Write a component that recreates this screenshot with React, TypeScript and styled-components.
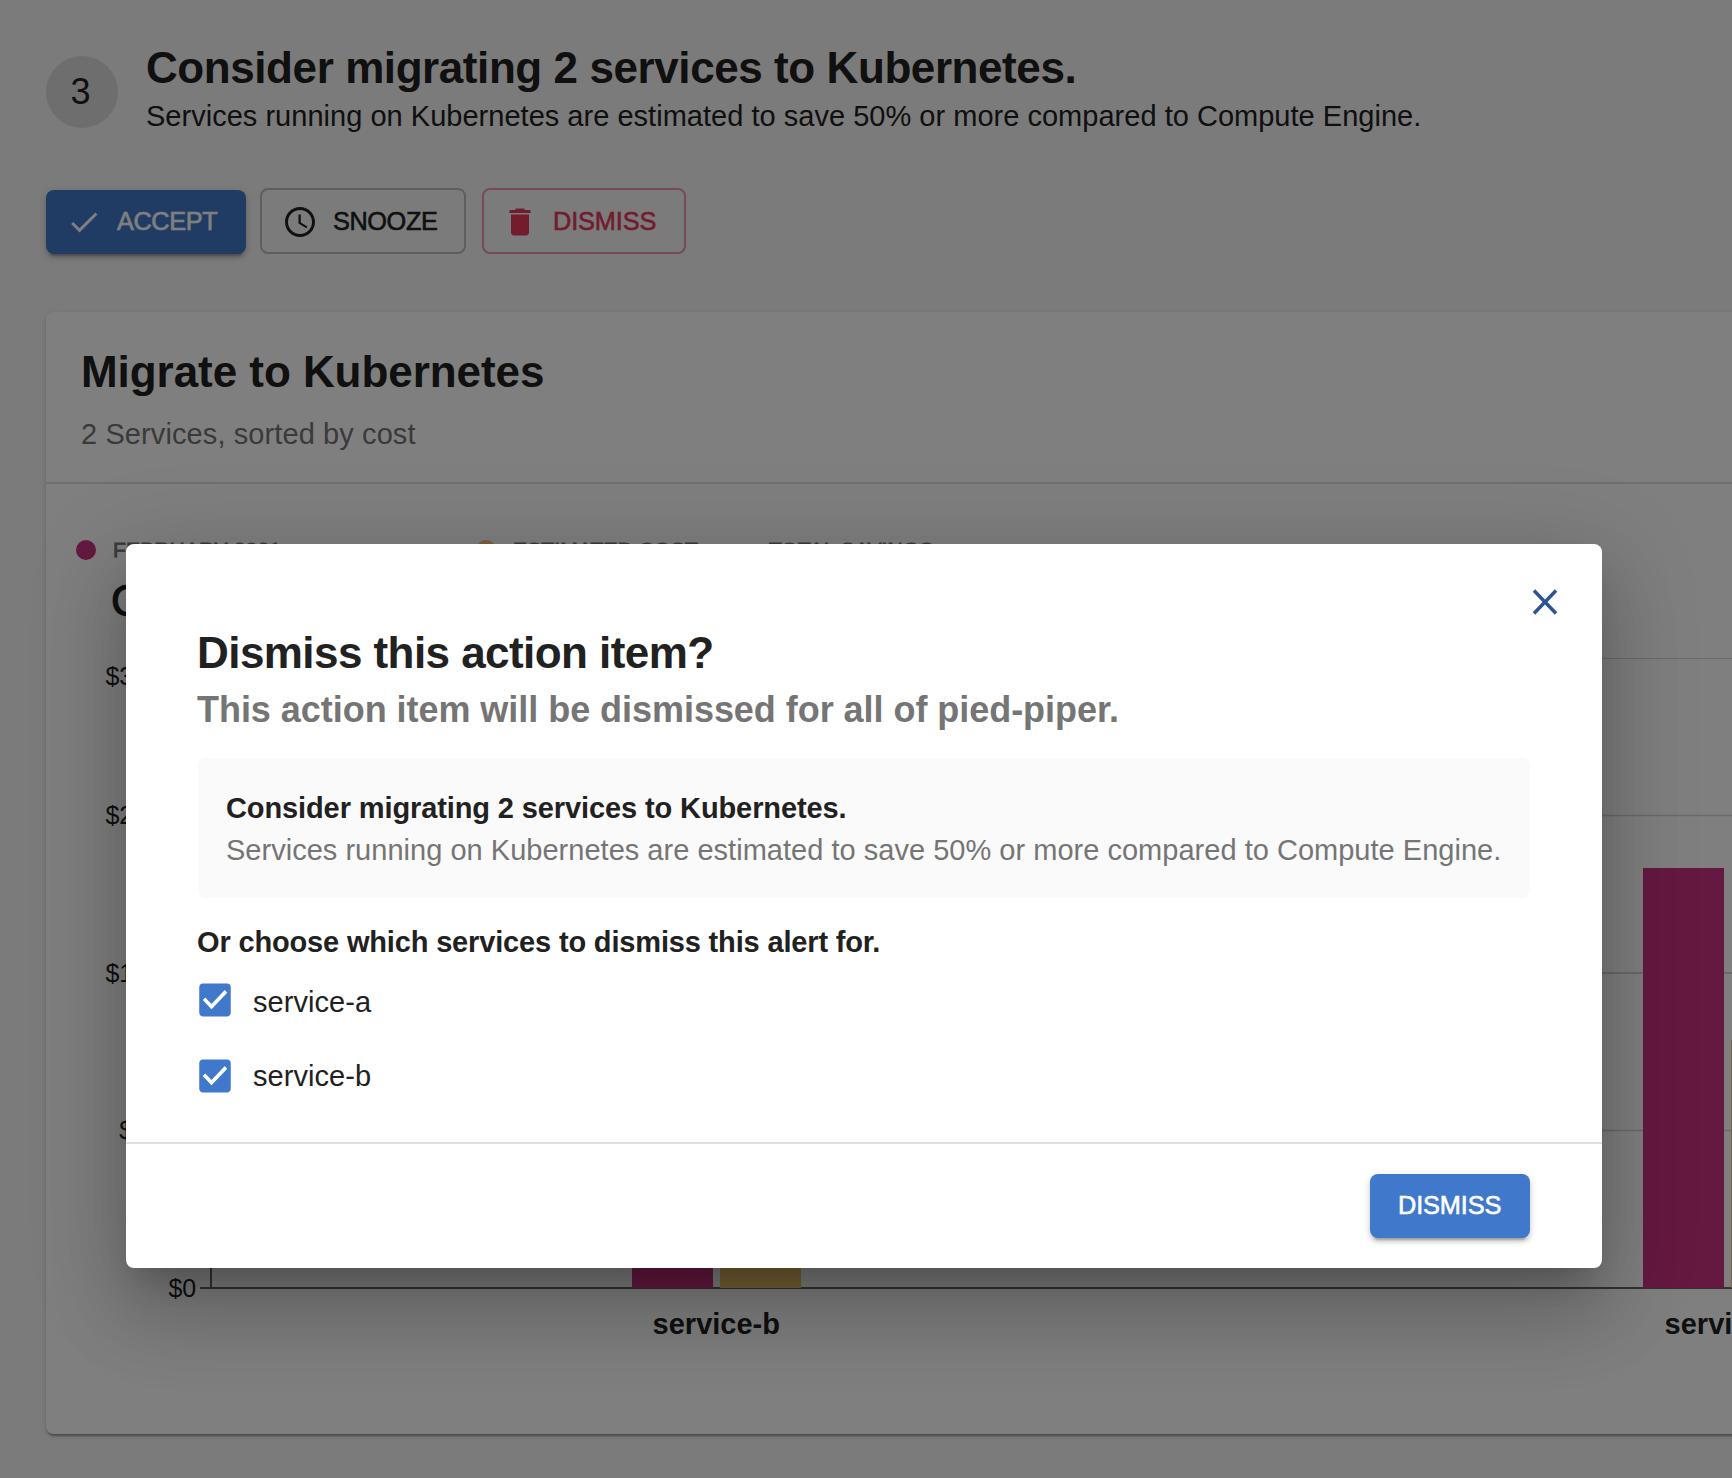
import React from "react";
import styled, { createGlobalStyle } from "styled-components";

const colors = {
  page: "#f6f6f6",
  paper: "#ffffff",
  text: "#212121",
  muted: "#757575",
  primary: "#4078cb",
  primaryDark: "#2b5490",
  danger: "#e6365e",
  magenta: "#ca3280",
  yellow: "#f0c56e",
  divider: "#e0e0e0",
};

const GlobalStyle = createGlobalStyle`
  *, *::before, *::after { box-sizing: border-box; }
  body {
    margin: 0;
    background: ${colors.page};
    color: ${colors.text};
    font-family: "Liberation Sans", Arial, Helvetica, sans-serif;
  }
  h1, h2, h3, p { margin: 0; }
`;

/* ---------- typography ---------- */

const Heading = styled.h2<{ $tracking?: number }>`
  font-size: 44px;
  line-height: 52px;
  font-weight: 700;
  letter-spacing: ${(p) => p.$tracking ?? 0}px;
  white-space: nowrap;
`;

const Body = styled.p<{ $muted?: boolean; $bold?: boolean; $tracking?: number }>`
  font-size: 29px;
  line-height: 40px;
  font-weight: ${(p) => (p.$bold ? 700 : 400)};
  color: ${(p) => (p.$muted ? colors.muted : colors.text)};
  letter-spacing: ${(p) => p.$tracking ?? 0}px;
  white-space: nowrap;
`;

/* ---------- page ---------- */

const Page = styled.div`
  position: relative;
  width: 1732px;
  height: 1478px;
  overflow: hidden;
`;

const Content = styled.main`
  padding: 42px 0 0 46px;
`;

const ActionHeader = styled.header`
  display: flex;
  align-items: flex-start;
  gap: 28px;
`;

const ActionText = styled.div`
  display: flex;
  flex-direction: column;
  gap: 2px;
`;

const StepBadge = styled.div`
  display: flex;
  align-items: center;
  justify-content: center;
  width: 72px;
  height: 72px;
  margin-top: 14px;
  padding-right: 3px;
  border-radius: 50%;
  background: #dcdcdc;
  font-size: 36px;
`;

const ActionBar = styled.div`
  display: flex;
  align-items: flex-end;
  margin-top: 52px;
`;

const Button = styled.button<{
  $variant?: "contained" | "outlined" | "danger";
  $width: number;
  $padding?: number;
  $tracking: number;
}>`
  display: flex;
  align-items: center;
  gap: 15px;
  width: ${(p) => p.$width}px;
  height: ${(p) => (p.$variant === "contained" ? 64 : 66)}px;
  padding: ${(p) => (p.$variant === "contained" ? 0 : 2)}px 0 0 ${(p) => p.$padding ?? 20}px;
  border: ${(p) =>
    p.$variant === "contained"
      ? "0"
      : p.$variant === "danger"
        ? "2px solid rgba(230, 54, 94, 0.5)"
        : "2px solid rgba(0, 0, 0, 0.23)"};
  border-radius: 8px;
  background: ${(p) => (p.$variant === "contained" ? colors.primary : "transparent")};
  color: ${(p) =>
    p.$variant === "contained" ? "#fff" : p.$variant === "danger" ? colors.danger : colors.text};
  box-shadow: ${(p) =>
    p.$variant === "contained"
      ? "0 6px 2px -4px rgba(0,0,0,.2), 0 4px 4px 0 rgba(0,0,0,.14), 0 2px 10px 0 rgba(0,0,0,.12)"
      : "none"};
  font: 400 25.3px/36px "Liberation Sans", Arial, sans-serif;
  letter-spacing: ${(p) => p.$tracking}px;
  -webkit-text-stroke: 0.6px currentColor;
`;

const SnoozeSlot = styled.div`
  margin: 0 16px 0 14px;
`;

const ButtonLabel = styled.span`
  padding-bottom: 2px;
`;

const ButtonIcon = styled.svg`
  display: block;
  flex: none;
  width: 36px;
  height: 36px;
  fill: currentColor;
  stroke: none;
`;

/* ---------- card ---------- */

const Card = styled.section`
  width: 1740px;
  height: 1122px;
  margin-top: 58px;
  border-radius: 8px;
  background: ${colors.paper};
  box-shadow: 0 4px 2px -2px rgba(0, 0, 0, 0.2), 0 2px 2px 0 rgba(0, 0, 0, 0.14),
    0 2px 6px 0 rgba(0, 0, 0, 0.12);
`;

const CardHeader = styled.div`
  display: flex;
  flex-direction: column;
  gap: 16px;
  height: 172px;
  padding: 34px 0 0 35px;
  border-bottom: 2px solid ${colors.divider};
`;

const Legend = styled.div`
  display: grid;
  grid-template-columns: 400px 276px 300px;
  height: 144px;
  padding: 54px 0 0 30px;
`;

const LegendItem = styled.div`
  display: flex;
  align-items: flex-start;
  gap: 17px;
`;

const Dot = styled.span<{ $color: string }>`
  width: 20px;
  height: 20px;
  margin-top: 2px;
  border-radius: 50%;
  background: ${(p) => p.$color};
`;

const LegendLabel = styled.div`
  font-size: 21px;
  line-height: 24px;
  letter-spacing: 0.15px;
  color: ${colors.muted};
  white-space: nowrap;
  -webkit-text-stroke: 0.8px currentColor;
`;

const LegendValue = styled.div`
  margin: 11px 0 0 -2px;
  font-size: 45px;
  line-height: 56px;
  -webkit-text-stroke: 1px currentColor;
  white-space: nowrap;
`;

const ChartSvg = styled.svg`
  display: block;
  width: 1740px;
  height: 806px;
  font-family: "Liberation Sans", Arial, sans-serif;
`;

/* ---------- dialog ---------- */

const Backdrop = styled.div`
  position: absolute;
  inset: 0;
  padding: 544px 0 0 126px;
  background: rgba(0, 0, 0, 0.5);
`;

const Dialog = styled.div`
  position: relative;
  width: 1476px;
  height: 724px;
  border-radius: 8px;
  background: ${colors.paper};
  box-shadow: 0 22px 30px -14px rgba(0, 0, 0, 0.2), 0 48px 76px 6px rgba(0, 0, 0, 0.14),
    0 18px 92px 16px rgba(0, 0, 0, 0.12);
`;

const CloseButton = styled.button`
  position: absolute;
  top: 36px;
  right: 36px;
  padding: 0;
  border: 0;
  background: none;
  color: ${colors.primaryDark};
`;

const GlyphSvg = styled.svg`
  display: block;
  flex: none;
  width: 42px;
  height: 44px;
  fill: currentColor;
`;

const DialogBody = styled.div`
  height: 600px;
  padding: 83px 72px 0 71px;
  border-bottom: 2px solid ${colors.divider};
`;

const DialogSubtitle = styled.h3`
  margin-top: 9px;
  font-size: 36px;
  line-height: 44px;
  letter-spacing: -0.04px;
  color: ${colors.muted};
`;

const Summary = styled.div`
  display: flex;
  flex-direction: column;
  gap: 2px;
  height: 140px;
  margin: 26px 0 24px 1px;
  padding: 30px 0 0 28px;
  border-radius: 8px;
  background: #fafafa;
`;

const OptionList = styled.div`
  display: flex;
  flex-direction: column;
  gap: 34px;
  margin-top: 20px;
`;

const Option = styled.label<{ $offset: number }>`
  display: flex;
  align-items: flex-start;
  height: 40px;
  gap: 17px;
  margin-left: -3px;

  ${GlyphSvg} {
    margin-top: ${(p) => p.$offset}px;
    color: ${colors.primary};
  }
`;

const DialogFooter = styled.div`
  display: flex;
  justify-content: flex-end;
  padding: 30px 72px 0 0;
`;

/* ---------- data ---------- */

const ticks = [
  { label: "$30,000", y: 658.5, textY: 685, weight: 1 },
  { label: "$22,500", y: 815.5, textY: 823.5, weight: 1.4 },
  { label: "$15,000", y: 973, textY: 981.5, weight: 2 },
  { label: "$7,500", y: 1130.5, textY: 1139, weight: 1.4 },
];

const bars = [
  { x: 632, y: 1240, width: 81, color: colors.magenta },
  { x: 720, y: 1258, width: 81, color: colors.yellow },
  { x: 1643, y: 868, width: 81, color: colors.magenta },
  { x: 1731, y: 1040, width: 81, color: colors.yellow },
];

const services = [
  { name: "service-a", offset: -4 },
  { name: "service-b", offset: -2 },
];

function CostChart() {
  return (
    <ChartSvg viewBox="46 628 1740 806">
      {ticks.map((t) => (
        <g key={t.label}>
          <line x1={211} x2={1786} y1={t.y} y2={t.y} stroke="#d4d4d4" strokeWidth={t.weight} />
          <text x={195.8} y={t.textY} textAnchor="end" fontSize={25} fill={colors.text}>
            {t.label}
          </text>
        </g>
      ))}
      <text x={196.2} y={1296.5} textAnchor="end" fontSize={25} fill={colors.text}>
        $0
      </text>
      <path d="M211 658V1288M200 1288H1786" stroke="#666" strokeWidth={2} fill="none" />
      {bars.map((b) => (
        <rect key={b.x} x={b.x} y={b.y} width={b.width} height={1288 - b.y} fill={b.color} />
      ))}
      <text x={716.3} y={1334} textAnchor="middle" fontSize={29} fontWeight={700} fill={colors.text}>
        service-b
      </text>
      <text x={1727.5} y={1334} textAnchor="middle" fontSize={29} fontWeight={700} fill={colors.text}>
        service-a
      </text>
    </ChartSvg>
  );
}

export default function App() {
  return (
    <>
      <GlobalStyle />
      <Page>
        <Content>
          <ActionHeader>
            <StepBadge>3</StepBadge>
            <ActionText>
              <Heading $tracking={-0.42}>Consider migrating 2 services to Kubernetes.</Heading>
              <Body $tracking={0.02}>
                Services running on Kubernetes are estimated to save 50% or more compared to Compute Engine.
              </Body>
            </ActionText>
          </ActionHeader>

          <ActionBar>
            <Button $variant="contained" $width={200} $tracking={-0.4}>
              <ButtonIcon viewBox="0 0 24 24">
                <path d="M9 16.17L4.83 12l-1.42 1.41L9 19 21 7l-1.41-1.41z" />
              </ButtonIcon>
              <ButtonLabel>ACCEPT</ButtonLabel>
            </Button>
            <SnoozeSlot>
              <Button $variant="outlined" $width={206} $tracking={-0.4}>
                <ButtonIcon viewBox="0 0 24 24">
                  <path d="M11.99 2C6.47 2 2 6.48 2 12s4.47 10 9.99 10C17.52 22 22 17.52 22 12S17.52 2 11.99 2zM12 20c-4.42 0-8-3.58-8-8s3.58-8 8-8 8 3.58 8 8-3.58 8-8 8zM12.5 7H11v6l5.25 3.15.75-1.23-4.5-2.67z" />
                </ButtonIcon>
                <ButtonLabel>SNOOZE</ButtonLabel>
              </Button>
            </SnoozeSlot>
            <Button $variant="danger" $width={204} $padding={18} $tracking={-0.1}>
              <ButtonIcon viewBox="0 0 24 24">
                <path d="M6 19c0 1.1.9 2 2 2h8c1.1 0 2-.9 2-2V7H6v12zM19 4h-3.5l-1-1h-5l-1 1H5v2h14V4z" />
              </ButtonIcon>
              <ButtonLabel>DISMISS</ButtonLabel>
            </Button>
          </ActionBar>

          <Card>
            <CardHeader>
              <Heading $tracking={-0.05}>Migrate to Kubernetes</Heading>
              <Body $muted $tracking={0.1}>
                2 Services, sorted by cost
              </Body>
            </CardHeader>
            <Legend>
              <LegendItem>
                <Dot $color={colors.magenta} />
                <div>
                  <LegendLabel>FEBRUARY 2021</LegendLabel>
                  <LegendValue>Over 1 engineer</LegendValue>
                </div>
              </LegendItem>
              <LegendItem>
                <Dot $color={colors.yellow} />
                <LegendLabel>ESTIMATED COST</LegendLabel>
              </LegendItem>
              <LegendItem>
                <span />
                <LegendLabel>TOTAL SAVINGS</LegendLabel>
              </LegendItem>
            </Legend>
            <CostChart />
          </Card>
        </Content>

        <Backdrop>
          <Dialog role="dialog">
            <CloseButton aria-label="Close">
              <GlyphSvg viewBox="0 0 24 24" preserveAspectRatio="none">
                <path d="M19 6.41L17.59 5 12 10.59 6.41 5 5 6.41 10.59 12 5 17.59 6.41 19 12 13.41 17.59 19 19 17.59 13.41 12z" />
              </GlyphSvg>
            </CloseButton>
            <DialogBody>
              <Heading $tracking={-0.56}>Dismiss this action item?</Heading>
              <DialogSubtitle>This action item will be dismissed for all of pied-piper.</DialogSubtitle>
              <Summary>
                <Body $bold $tracking={-0.11}>
                  Consider migrating 2 services to Kubernetes.
                </Body>
                <Body $muted $tracking={0.02}>
                  Services running on Kubernetes are estimated to save 50% or more compared to Compute Engine.
                </Body>
              </Summary>
              <Body $bold $tracking={-0.16}>
                Or choose which services to dismiss this alert for.
              </Body>
              <OptionList>
                {services.map((s) => (
                  <Option key={s.name} $offset={s.offset}>
                    <GlyphSvg viewBox="0 0 24 24" preserveAspectRatio="none">
                      <path d="M19 3H5c-1.11 0-2 .9-2 2v14c0 1.1.89 2 2 2h14c1.11 0 2-.9 2-2V5c0-1.1-.89-2-2-2zm-9 14l-5-5 1.41-1.41L10 14.17l7.59-7.59L19 8l-9 9z" />
                    </GlyphSvg>
                    <Body as="span" $tracking={0.05}>
                      {s.name}
                    </Body>
                  </Option>
                ))}
              </OptionList>
            </DialogBody>
            <DialogFooter>
              <Button $variant="contained" $width={160} $padding={28} $tracking={-0.1}>
                <ButtonLabel>DISMISS</ButtonLabel>
              </Button>
            </DialogFooter>
          </Dialog>
        </Backdrop>
      </Page>
    </>
  );
}
